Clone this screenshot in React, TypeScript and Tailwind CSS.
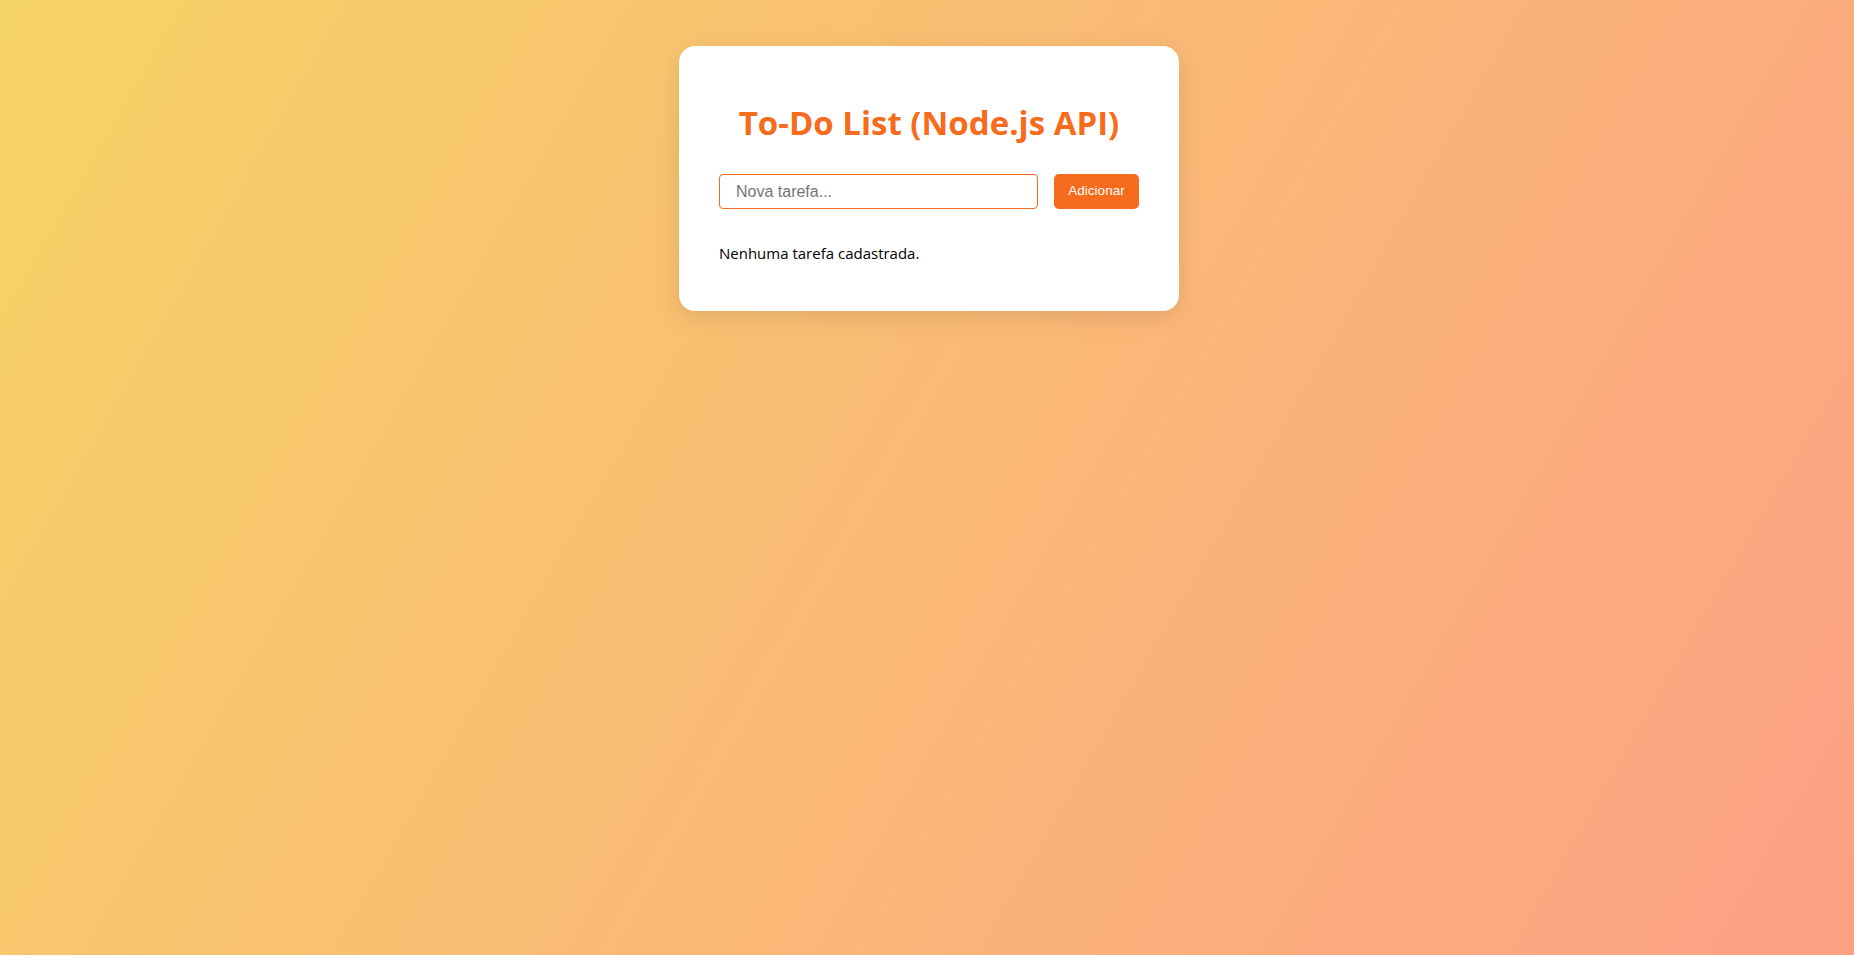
import React, { useState } from "react";

const App = () => {
  const [task, setTask] = useState("");
  const [tasks, setTasks] = useState<string[]>([]);

  const addTask = () => {
    if (!task.trim()) return;
    setTasks([...tasks, task.trim()]);
    setTask("");
  };

  return (
    <div className="min-h-screen w-full bg-[linear-gradient(120deg,#f6d365_0%,#fda085_100%)] flex justify-center pt-[46px] pl-1">
      <div className="w-[500px] self-start bg-white rounded-2xl shadow-[0_6px_24px_rgba(0,0,0,0.1)] px-10 pt-[57px] pb-[47px] font-['Open_Sans',sans-serif]">
        <h1 className="text-center text-[33px] leading-[40px] font-bold text-[#f76b1c]">
          To-Do List (Node.js API)
        </h1>
        <div className="flex gap-4 mt-[31px]">
          <input
            value={task}
            onChange={(e) => setTask(e.target.value)}
            placeholder="Nova tarefa..."
            className="flex-1 h-[35px] border border-[#f76b1c] rounded-[4px] px-4 text-[16px] font-['Liberation_Sans',Arial,sans-serif] placeholder:text-[#757575] outline-none"
          />
          <button
            onClick={addTask}
            className="w-[85px] h-[35px] bg-[#f76b1c] text-white rounded-[5px] text-[13.5px] font-['Liberation_Sans',Arial,sans-serif]"
          >
            Adicionar
          </button>
        </div>
        <div className="mt-[33px] text-[15px] leading-[22px] text-black">
          {tasks.length === 0 ? (
            <p>Nenhuma tarefa cadastrada.</p>
          ) : (
            <ul>
              {tasks.map((t, i) => (
                <li key={i}>{t}</li>
              ))}
            </ul>
          )}
        </div>
      </div>
    </div>
  );
};

export default App;
